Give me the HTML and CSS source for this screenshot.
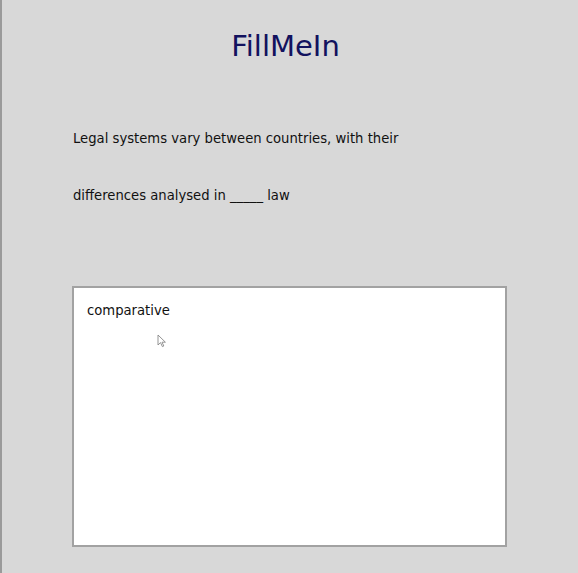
FILE: index.html
```html
<!DOCTYPE html>
<html lang="en">
  <head>
    <meta charset="UTF-8" />
    <meta name="viewport" content="width=device-width, initial-scale=1.0" />
    <title>FillMeIn</title>
    <link rel="stylesheet" href="styles.css">
  </head>
  <body>
    <div class="page">
      <h1 class="title">FillMeIn</h1>
      <p class="question">
        Legal systems vary between countries, with their<br />
        differences analysed in _____ law
      </p>
      <div class="answer">
        <span class="answer-text">comparative</span>
        <!-- mouse pointer resting over the answer box -->
        <svg class="pointer" width="10" height="14" viewBox="0 0 10 14">
          <path d="M1 1 L1 11 L3.5 8.6 L5.4 12.6 L6.8 12 L5 8.2 L8.4 8.2 Z" fill="#fff" stroke="#888" stroke-width="0.9" stroke-linejoin="round" />
        </svg>
      </div>
    </div>
  </body>
</html>
```

FILE: styles.css
```css
html,
body {
  margin: 0;
  height: 100%;
}

body {
  background: #d8d8d8;
  font-family: "DejaVu Sans", Verdana, sans-serif;
  color: #111;
}

.page {
  height: 100%;
  box-sizing: border-box;
  border-left: 2px solid #9a9a9a;
  padding: 30px 79px 0 70px;
}

.title {
  margin: 0;
  text-align: center;
  font-size: 29px;
  line-height: 33px;
  font-weight: normal;
  color: #12125e;
}

.question {
  margin: 47px 0 0 1px;
  font-size: 13.2px;
  line-height: 57px;
}

.answer {
  position: relative;
  margin-top: 62px;
  width: 435px;
  height: 261px;
  background: #fff;
  border: 2px solid #a2a2a2;
  padding: 15px 13px;
  box-sizing: border-box;
  font-size: 13.2px;
}

.pointer {
  position: absolute;
  left: 83px;
  top: 46px;
}
```
